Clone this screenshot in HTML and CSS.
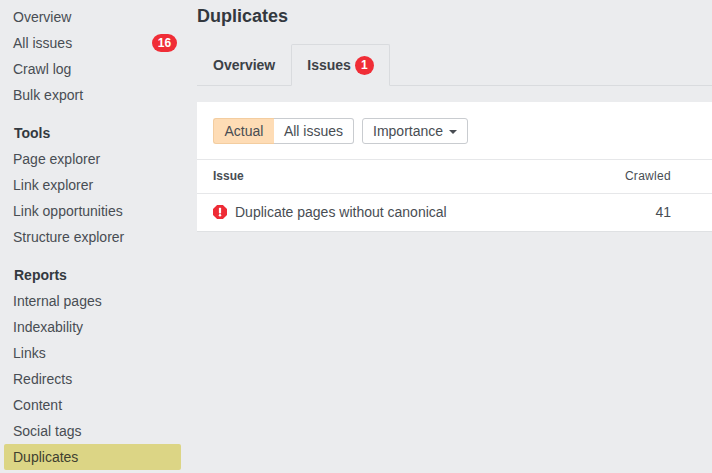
FILE: index.html
```
<!DOCTYPE html>
<html lang="en">
<head>
<meta charset="utf-8">
<title>Duplicates</title>
<link rel="stylesheet" href="styles.css">
</head>
<body>
<div class="app">
  <nav class="sidebar">
    <ul class="nav-group">
      <li class="nav-item">Overview</li>
      <li class="nav-item">All issues <span class="count">16</span></li>
      <li class="nav-item">Crawl log</li>
      <li class="nav-item">Bulk export</li>
    </ul>
    <ul class="nav-group">
      <li class="nav-heading">Tools</li>
      <li class="nav-item">Page explorer</li>
      <li class="nav-item">Link explorer</li>
      <li class="nav-item">Link opportunities</li>
      <li class="nav-item">Structure explorer</li>
    </ul>
    <ul class="nav-group">
      <li class="nav-heading">Reports</li>
      <li class="nav-item">Internal pages</li>
      <li class="nav-item">Indexability</li>
      <li class="nav-item">Links</li>
      <li class="nav-item">Redirects</li>
      <li class="nav-item">Content</li>
      <li class="nav-item">Social tags</li>
      <li class="nav-item nav-item-active">Duplicates</li>
    </ul>
  </nav>
  <main class="main">
    <h1 class="title">Duplicates</h1>
    <div class="tabs">
      <div class="tab">Overview</div>
      <div class="tab tab-active">Issues <span class="dot">1</span></div>
    </div>
    <section class="panel">
      <div class="toolbar">
        <div class="segmented">
          <button class="btn seg seg-on">Actual</button>
          <button class="btn seg seg-off">All issues</button>
        </div>
        <button class="btn dropdown">Importance <span class="caret"></span></button>
      </div>
      <div class="row row-head">
        <span class="cell-issue">Issue</span>
        <span class="cell-num">Crawled</span>
      </div>
      <div class="row row-body">
        <span class="cell-issue">
          <svg class="alert" viewBox="0 0 14 14" aria-hidden="true">
            <path class="alert-bg" d="M4.1 0h5.800L14 4.100v5.800L9.900 14H4.100L0 9.900V4.100z"/>
            <rect class="alert-mark" x="5.900" y="2.800" width="2.200" height="5.600" rx=".6"/>
            <circle class="alert-mark" cx="7" cy="10.300" r="1.200"/>
          </svg>
          Duplicate pages without canonical
        </span>
        <span class="cell-num">41</span>
      </div>
    </section>
  </main>
</div>
</body>
</html>
```
FILE: styles.css
```
* { box-sizing: border-box; }
html, body { margin: 0; height: 100%; }
body {
  background: #ebecee;
  color: #484d53;
  font-family: "Liberation Sans", Arial, sans-serif;
  font-size: 14px;
  overflow: hidden;
}
.app { display: flex; height: 473px; overflow: hidden; }
.sidebar { width: 197px; flex: none; padding: 4px 16px 0 4px; }
.nav-group { list-style: none; margin: 0 0 12px; padding: 0; }
.nav-item {
  display: flex;
  align-items: center;
  justify-content: space-between;
  height: 26px;
  padding: 0 4px 0 9px;
  border-radius: 2px;
}
.nav-item-active { background: #dcd585; color: #3f4030; }
.nav-heading {
  display: flex;
  align-items: center;
  height: 26px;
  padding-left: 10px;
  font-weight: bold;
  color: #333940;
}
.count {
  display: block;
  min-width: 25px;
  height: 18px;
  border-radius: 9px;
  background: #f02d36;
  color: #fff;
  font-size: 12px;
  font-weight: bold;
  line-height: 18px;
  text-align: center;
}
.main { flex: 1; min-width: 0; }
.title {
  margin: 0;
  height: 44px;
  padding-top: 5px;
  font-size: 18px;
  line-height: 22px;
  font-weight: bold;
  color: #33383e;
}
.tabs {
  display: flex;
  height: 42px;
  border-bottom: 1px solid #d9dbde;
}
.tab {
  display: flex;
  align-items: center;
  height: 42px;
  padding: 0 16px;
  font-weight: bold;
  color: #3c4147;
}
.tab-active {
  width: 99px;
  padding: 0 15px;
  border: 1px solid #d9dbde;
  border-bottom-color: #ebecee;
  border-radius: 2px 2px 0 0;
  gap: 4px;
}
.dot {
  display: block;
  flex: none;
  width: 19px;
  height: 19px;
  border-radius: 50%;
  background: #f02d36;
  color: #fff;
  font-size: 12px;
  line-height: 19px;
  text-align: center;
}
.panel {
  margin-top: 16px;
  background: #fff;
  border-bottom: 1px solid #dfe1e3;
}
.toolbar {
  display: flex;
  gap: 8px;
  height: 57px;
  padding: 16px 16px 0;
}
.segmented { display: flex; }
.btn {
  height: 26px;
  padding: 0;
  border: 1px solid #c9ccd0;
  border-radius: 3px;
  background: #fff;
  color: #484d53;
  font: inherit;
  white-space: nowrap;
}
.seg-on {
  width: 61px;
  background: #fedcb5;
  border-color: #f3cda0;
  border-right: 0;
  border-radius: 3px 0 0 3px;
}
.seg-off { width: 80px; border-left: 0; border-radius: 0 3px 3px 0; }
.dropdown { width: 106px; }
.caret {
  display: inline-block;
  margin-left: 2px;
  vertical-align: 2px;
  border: 4px solid transparent;
  border-top-color: #484d53;
  border-bottom: 0;
}
.row {
  display: flex;
  align-items: center;
  justify-content: space-between;
  padding: 0 41px 0 16px;
  border-top: 1px solid #e6e7e9;
}
.row-head { height: 34px; padding-bottom: 2px; font-size: 12px; }
.row-head .cell-issue { font-weight: bold; }
.row-head .cell-num { letter-spacing: .3px; }
.row-body { height: 38px; padding-bottom: 2px; }
.cell-issue { display: flex; align-items: center; gap: 8px; }
.alert { width: 14px; height: 14px; flex: none; }
.alert-bg { fill: #ee2c36; }
.alert-mark { fill: #fff; }
```
